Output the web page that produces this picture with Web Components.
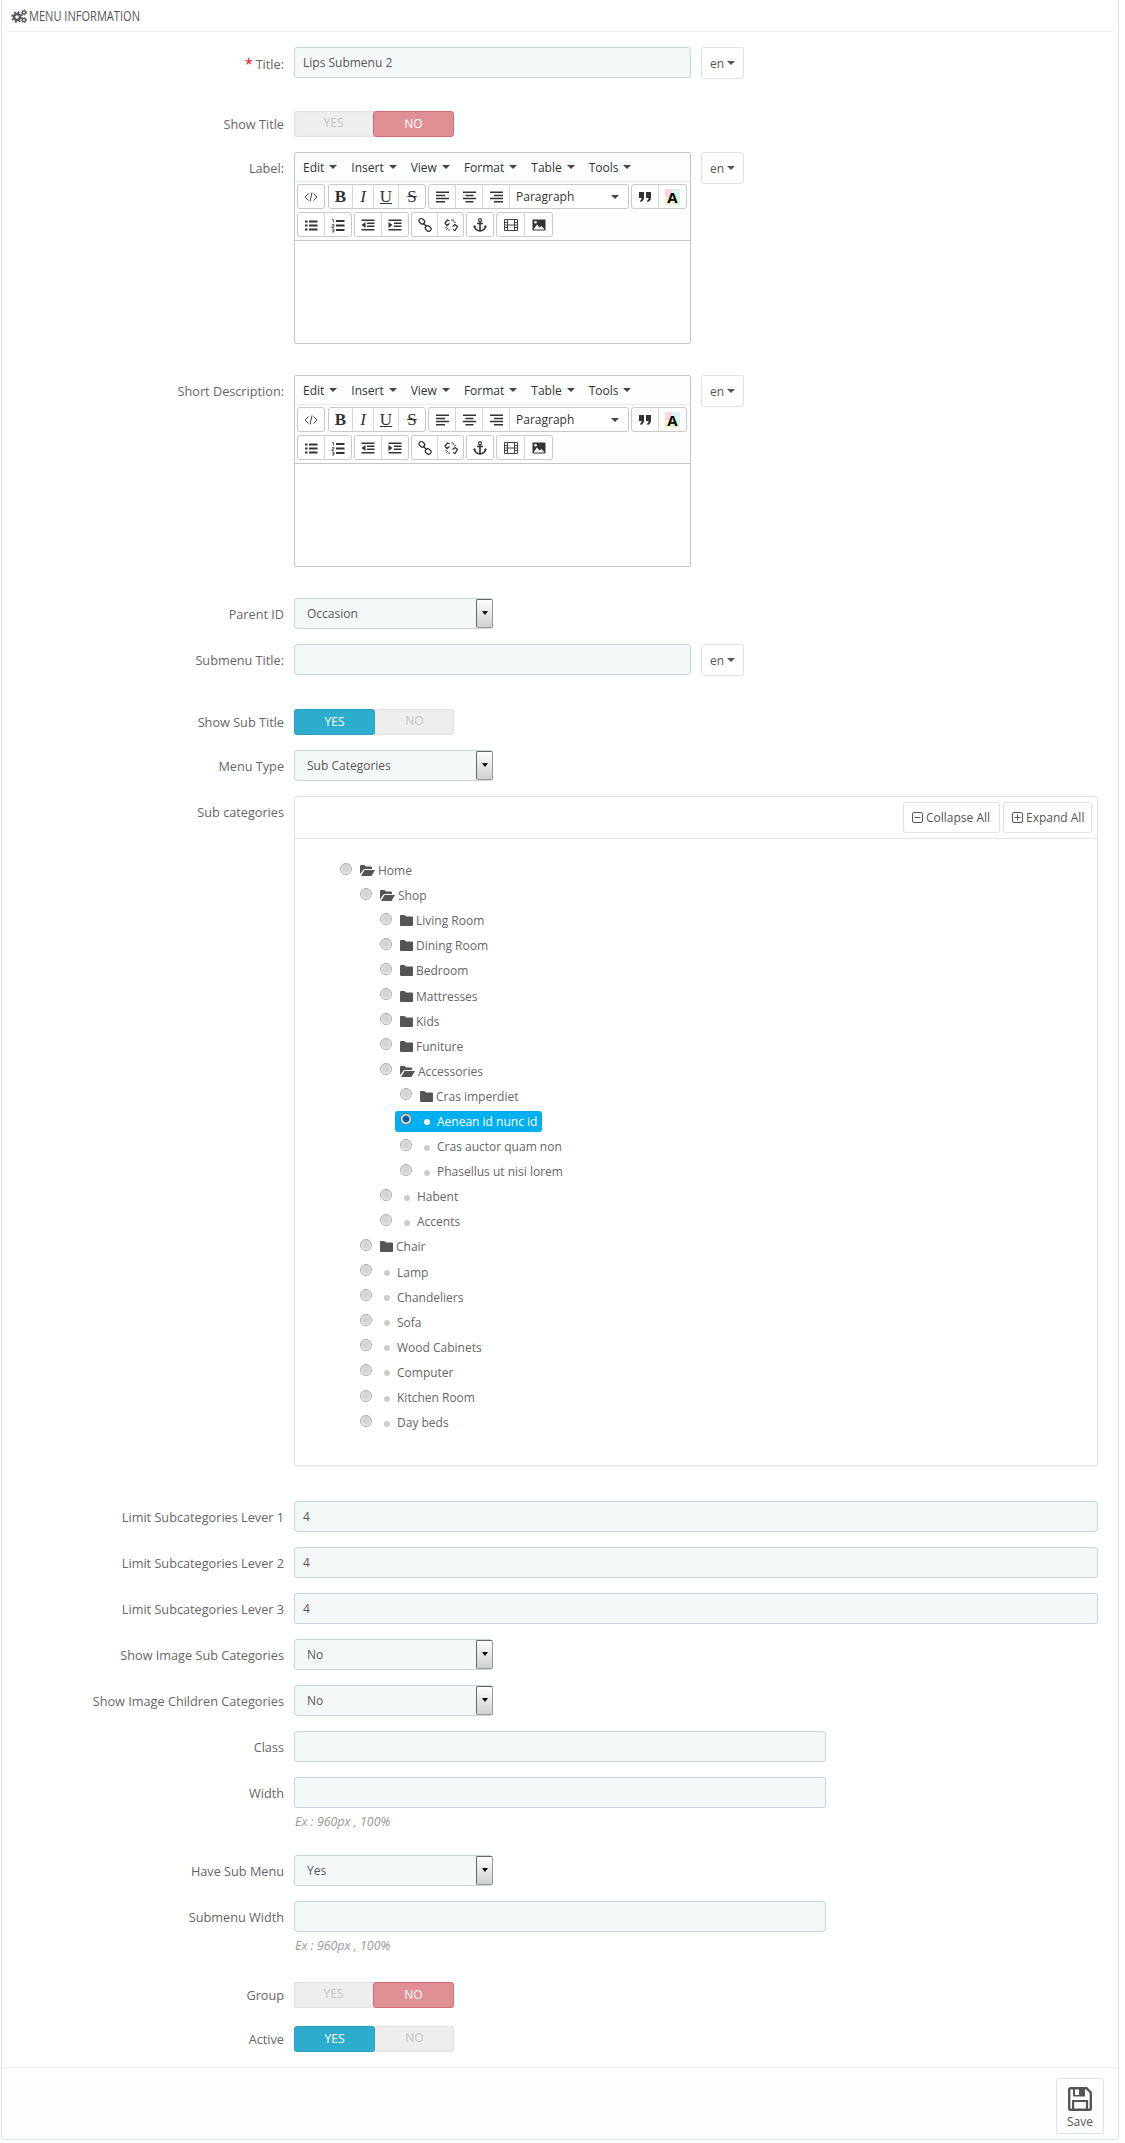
<!DOCTYPE html>
<html lang="en">
<head>
<meta charset="utf-8">
<title>Menu information</title>
<style>
    html, body { margin: 0; background: #fff; }
    body { font: 12px/17px "Open Sans", "Liberation Sans", sans-serif; color: #666; }
</style>
</head>
<body>

<menu-panel heading="Menu information">
    <form-row label="Title:" required style="margin-bottom:32px">
        <text-field value="Lips Submenu 2" style="width:397px"></text-field>
        <lang-button></lang-button>
    </form-row>
    <form-row label="Show Title" compact>
        <switch-toggle value="no"></switch-toggle>
    </form-row>
    <form-row label="Label:" style="margin-bottom:31px">
        <rich-editor></rich-editor>
        <lang-button></lang-button>
    </form-row>
    <form-row label="Short Description:" style="margin-bottom:31px">
        <rich-editor></rich-editor>
        <lang-button></lang-button>
    </form-row>
    <form-row label="Parent ID">
        <select-box value="Occasion"></select-box>
    </form-row>
    <form-row label="Submenu Title:" style="margin-bottom:33px">
        <text-field style="width:397px"></text-field>
        <lang-button></lang-button>
    </form-row>
    <form-row label="Show Sub Title" compact>
        <switch-toggle value="yes"></switch-toggle>
    </form-row>
    <form-row label="Menu Type">
        <select-box value="Sub Categories"></select-box>
    </form-row>
    <form-row label="Sub categories" style="margin-bottom:35px">
        <category-tree>
            <tree-node level="0" kind="open">Home</tree-node>
            <tree-node level="1" kind="open">Shop</tree-node>
            <tree-node level="2" kind="folder">Living Room</tree-node>
            <tree-node level="2" kind="folder">Dining Room</tree-node>
            <tree-node level="2" kind="folder">Bedroom</tree-node>
            <tree-node level="2" kind="folder">Mattresses</tree-node>
            <tree-node level="2" kind="folder">Kids</tree-node>
            <tree-node level="2" kind="folder">Funiture</tree-node>
            <tree-node level="2" kind="open">Accessories</tree-node>
            <tree-node level="3" kind="folder">Cras imperdiet</tree-node>
            <tree-node level="3" selected>Aenean id nunc id</tree-node>
            <tree-node level="3">Cras auctor quam non</tree-node>
            <tree-node level="3">Phasellus ut nisi lorem</tree-node>
            <tree-node level="2">Habent</tree-node>
            <tree-node level="2">Accents</tree-node>
            <tree-node level="1" kind="folder">Chair</tree-node>
            <tree-node level="1">Lamp</tree-node>
            <tree-node level="1">Chandeliers</tree-node>
            <tree-node level="1">Sofa</tree-node>
            <tree-node level="1">Wood Cabinets</tree-node>
            <tree-node level="1">Computer</tree-node>
            <tree-node level="1">Kitchen Room</tree-node>
            <tree-node level="1">Day beds</tree-node>
        </category-tree>
    </form-row>
    <form-row label="Limit Subcategories Lever 1"><text-field value="4" style="flex:1"></text-field></form-row>
    <form-row label="Limit Subcategories Lever 2"><text-field value="4" style="flex:1"></text-field></form-row>
    <form-row label="Limit Subcategories Lever 3"><text-field value="4" style="flex:1"></text-field></form-row>
    <form-row label="Show Image Sub Categories"><select-box value="No"></select-box></form-row>
    <form-row label="Show Image Children Categories"><select-box value="No"></select-box></form-row>
    <form-row label="Class"><text-field style="width:532px"></text-field></form-row>
    <form-row label="Width" style="margin-bottom:25px">
        <text-field style="width:532px"></text-field>
        <help-text>Ex : 960px , 100%</help-text>
    </form-row>
    <form-row label="Have Sub Menu"><select-box value="Yes"></select-box></form-row>
    <form-row label="Submenu Width" style="margin-bottom:28px">
        <text-field style="width:532px"></text-field>
        <help-text>Ex : 960px , 100%</help-text>
    </form-row>
    <form-row label="Group" compact style="margin-bottom:18px">
        <switch-toggle value="no"></switch-toggle>
    </form-row>
    <form-row label="Active" compact>
        <switch-toggle value="yes"></switch-toggle>
    </form-row>
    <save-button slot="footer"></save-button>
</menu-panel>

<script>
class MenuPanel extends HTMLElement {
    connectedCallback() {
        this.attachShadow({ mode: 'open' });
        this.shadowRoot.innerHTML = `
            <style>
                :host {
                    display: block;
                    box-sizing: border-box;
                    width: 1118px;
                    margin-left: 1px;
                    background: #fff;
                    border: 1px solid #dde2e5;
                    border-top: 0;
                    border-radius: 0 0 3px 3px;
                }
                header {
                    display: flex;
                    align-items: center;
                    gap: 2px;
                    height: 32px;
                    margin: 0 5px;
                    padding-left: 4px;
                    box-sizing: border-box;
                    border-bottom: 1px solid #eee;
                    color: #555;
                    font-size: 14px;
                    text-transform: uppercase;
                }
                header span { transform: scaleX(0.79); transform-origin: 0 50%; white-space: nowrap; }
                header svg { display: block; }
                .body { padding-top: 15px; }
                footer {
                    display: flex;
                    justify-content: flex-end;
                    padding: 10px 14px 5px;
                    background: #fcfdfe;
                    border-top: 1px solid #eee;
                    border-radius: 0 0 3px 3px;
                }
            </style>
            <header>
                <svg width="16" height="14" viewBox="0 0 16 14">
                    <circle cx="6" cy="8" r="3" fill="none" stroke="#555" stroke-width="2.4"/>
                    <circle cx="6" cy="8" r="5" fill="none" stroke="#555" stroke-width="1.6" stroke-dasharray="2 1.93"/>
                    <circle cx="13" cy="3.4" r="1.6" fill="none" stroke="#555" stroke-width="1.3"/>
                    <circle cx="13" cy="3.4" r="2.6" fill="none" stroke="#555" stroke-width="1" stroke-dasharray="1.2 1.2"/>
                    <circle cx="13" cy="11" r="1.6" fill="none" stroke="#555" stroke-width="1.3"/>
                    <circle cx="13" cy="11" r="2.6" fill="none" stroke="#555" stroke-width="1" stroke-dasharray="1.2 1.2"/>
                </svg>
                <span>${this.getAttribute('heading')}</span>
            </header>
            <div class="body"><slot></slot></div>
            <footer><slot name="footer"></slot></footer>
        `;
    }
}

class FormRow extends HTMLElement {
    connectedCallback() {
        this.attachShadow({ mode: 'open' });
        const star = this.hasAttribute('required') ? '<b>*</b>' : '';
        this.shadowRoot.innerHTML = `
            <style>
                :host {
                    display: grid;
                    grid-template-columns: 282px 804px;
                    column-gap: 10px;
                    margin-bottom: 15px;
                }
                .label {
                    padding-top: 8px;
                    text-align: right;
                    white-space: nowrap;
                    font-size: 12.7px;
                }
                :host([compact]) .label { padding-top: 5px; }
                b {
                    margin-right: 3px;
                    color: #e00;
                    font-size: 14px;
                    font-weight: 400;
                }
                .control {
                    display: flex;
                    flex-wrap: wrap;
                    align-items: flex-start;
                    column-gap: 10px;
                }
            </style>
            <div class="label">${star}${this.getAttribute('label')}</div>
            <div class="control"><slot></slot></div>
        `;
    }
}

class TextField extends HTMLElement {
    connectedCallback() {
        this.attachShadow({ mode: 'open' });
        this.shadowRoot.innerHTML = `
            <style>
                :host {
                    display: block;
                    box-sizing: border-box;
                    height: 31px;
                    padding: 6px 8px;
                    background: #f5f8f9;
                    border: 1px solid #c7d6db;
                    border-radius: 3px;
                    color: #555;
                }
            </style>
            <span>${this.getAttribute('value') || ''}</span>
        `;
    }
}

class LangButton extends HTMLElement {
    connectedCallback() {
        this.attachShadow({ mode: 'open' });
        this.shadowRoot.innerHTML = `
            <style>
                :host {
                    display: flex;
                    align-items: center;
                    box-sizing: border-box;
                    width: 43px;
                    height: 32px;
                    padding-left: 8px;
                    background: #fff;
                    border: 1px solid #dfe3e6;
                    border-radius: 3px;
                    color: #555;
                }
                i {
                    margin-left: 3px;
                    border: 4px solid transparent;
                    border-top-color: #555;
                    border-bottom: 0;
                }
            </style>
            <span>en</span><i></i>
        `;
    }
}

class SwitchToggle extends HTMLElement {
    connectedCallback() {
        this.attachShadow({ mode: 'open' });
        const value = this.getAttribute('value');
        this.shadowRoot.innerHTML = `
            <style>
                :host {
                    display: flex;
                    box-sizing: border-box;
                    width: 160px;
                    height: 26px;
                    background: #eee;
                    border-radius: 3px;
                    box-shadow: inset 0 0 2px rgba(0, 0, 0, 0.2);
                    text-transform: uppercase;
                    color: #c4c4c4;
                    line-height: 24px;
                    text-align: center;
                }
                span { flex: 1; box-sizing: border-box; border-radius: 3px; }
                .yes { background: #2eacce; border: 1px solid #2a9fc0; color: #fff; }
                .no { background: #e08f95; border: 1px solid #cf6c74; color: #fff; }
            </style>
            <span class="${value === 'yes' ? 'yes' : ''}">Yes</span>
            <span class="${value === 'no' ? 'no' : ''}">No</span>
        `;
    }
}

class SelectBox extends HTMLElement {
    connectedCallback() {
        this.attachShadow({ mode: 'open' });
        this.shadowRoot.innerHTML = `
            <style>
                :host {
                    display: flex;
                    box-sizing: border-box;
                    width: 199px;
                    height: 31px;
                    background: #f5f8f9;
                    border: 1px solid #c7d6db;
                    border-radius: 3px;
                    color: #555;
                }
                span { flex: 1; padding: 6px 12px; }
                .arrow {
                    display: flex;
                    justify-content: center;
                    padding-top: 11px;
                    box-sizing: border-box;
                    width: 17px;
                    margin-right: -1px;
                    background: linear-gradient(#fdfdfd, #cfcfcf);
                    border: 1px solid #666;
                    border-right-color: #999;
                    border-bottom-color: #999;
                    border-radius: 2px;
                }
                i {
                    height: 0;
                    border: 3.5px solid transparent;
                    border-top: 4px solid #000;
                    border-bottom: 0;
                }
            </style>
            <span>${this.getAttribute('value')}</span>
            <div class="arrow"><i></i></div>
        `;
    }
}

class HelpText extends HTMLElement {
    connectedCallback() {
        this.attachShadow({ mode: 'open' });
        this.shadowRoot.innerHTML = `
            <style>
                :host {
                    display: block;
                    flex-basis: 100%;
                    margin-top: 5px;
                    padding-left: 1px;
                    color: #999;
                    font-size: 12.4px;
                    font-style: italic;
                }
            </style>
            <slot></slot>
        `;
    }
}

// toolbar icons for the editor, drawn on a 16px box
const editorIcons = {
    code: '<path d="M5.5 4.5 2 8l3.5 3.5M10.5 4.5 14 8l-3.500 3.500M9 3.500 7 12.500" fill="none" stroke="#444" stroke-width="1"/>',
    left: '<path d="M2 2.500h13v1.600H2zM2 5.800h9v1.400H2zM2 8.800h13v1.400H2zM2 11.900h9v1.600H2z" fill="#333"/>',
    center: '<path d="M2 2.500h13v1.600H2zM4.500 5.800h8v1.400h-8zM2 8.800h13v1.400H2zM4.500 11.900h8v1.600h-8z" fill="#333"/>',
    right: '<path d="M2 2.500h13v1.600H2zM6 5.800h9v1.400H6zM2 8.800h13v1.400H2zM6 11.900h9v1.600H6z" fill="#333"/>',
    quote: '<path d="M2 3h5v5.500C7 11 5.500 12.500 3.500 13l-.5-1.500c1-.3 1.500-1 1.500-2.500H2zM9 3h5v5.500c0 2.500-1.500 4-3.500 4.500l-.5-1.500c1-.3 1.500-1 1.500-2.500H9z" fill="#333"/>',
    bullets: '<path d="M2 3.500h2.500v2H2zM6 3.500h8.500v2H6zM2 7.500h2.500v2H2zM6 7.500h8.500v2H6zM2 11.500h2.500v2H2zM6 11.500h8.500v2H6z" fill="#333"/>',
    numbers: '<path d="M6 3h8.500v2H6zM6 7.500h8.500v2H6zM6 12h8.500v2H6z" fill="#333"/><path d="M2 2.500h1.500v3M2 7.500h2v1.500H2v1.500h2M2 12h2v3H2M2.500 13.500H4" fill="none" stroke="#444" stroke-width=".8"/>',
    outdent: '<path d="M1.500 2.500h13V4h-13zM7 5.500h7.500V7H7zM7 8.500h7.500V10H7zM1.500 12h13v1.500h-13zM5.500 5v6l-4-3z" fill="#333"/>',
    indent: '<path d="M1.500 2.500h13V4h-13zM7 5.500h7.500V7H7zM7 8.500h7.500V10H7zM1.500 12h13v1.500h-13zM1.500 5v6l4-3z" fill="#333"/>',
    link: '<g fill="none" stroke="#333" stroke-width="1.300"><rect x="1.800" y="2" width="6" height="4.600" rx="2.300" transform="rotate(40 4.800 4.300)"/><rect x="8.200" y="9.200" width="6" height="4.600" rx="2.300" transform="rotate(40 11.200 11.500)"/><path d="m6.200 6.200 3.600 3.600"/></g>',
    unlink: '<g fill="none" stroke="#333" stroke-width="1.300"><path d="M6.500 6.500 4 8.500 2 6l2.500-3 2 1M9.500 9.500l2.500-2 2.500 2-2.500 4-2-1"/><path d="M9 2v2M11 3 10 5M13 5l-2 1M2 11l2-1M3 13l2-2M6 12v2" stroke-width=".8"/></g>',
    anchor: '<path d="M8 5v9M5 6.500h6M2.500 9c0 3 2.500 4.500 5.500 5 3-.5 5.500-2 5.500-5" fill="none" stroke="#333" stroke-width="1.600"/><circle cx="8" cy="3.200" r="1.500" fill="none" stroke="#333" stroke-width="1.200"/><path d="m1 10 1.500-2 1.500 2zM12 10l1.500-2 1.500 2z" fill="#333"/>',
    media: '<path d="M1.500 2.500h13v11h-13zM4.500 2.500v11M11.500 2.500v11M1.500 5.500h3M1.500 8h3M1.500 10.500h3M11.500 5.500h3M11.500 8h3M11.500 10.500h3M4.500 8h7" fill="none" stroke="#444" stroke-width="1"/>',
    image: '<path d="M1.500 2.500h13v11h-13z" fill="#333"/><path d="M2.500 12.500 6 7.500l2.500 3 2-1.500 3 3.500z" fill="#fff"/><circle cx="4.500" cy="5.300" r="1.300" fill="#fff"/>'
};

class RichEditor extends HTMLElement {
    button(width, inner) {
        return `<span class="btn" style="width:${width}px">${inner}</span>`;
    }

    icon(name) {
        return `<svg width="16" height="16" viewBox="0 0 16 16">${editorIcons[name]}</svg>`;
    }

    connectedCallback() {
        this.attachShadow({ mode: 'open' });
        const menus = ['Edit', 'Insert', 'View', 'Format', 'Table', 'Tools']
            .map(m => `<span class="menu">${m}<i></i></span>`).join('');
        this.shadowRoot.innerHTML = `
            <style>
                :host {
                    display: block;
                    box-sizing: border-box;
                    width: 397px;
                    height: 192px;
                    background: #fff;
                    border: 1px solid #c5c5c5;
                    border-radius: 2px;
                    color: #333;
                }
                .menubar {
                    display: flex;
                    align-items: center;
                    height: 28px;
                    padding-left: 8px;
                    background: #fcfdfe;
                    border-bottom: 1px solid #e9ecee;
                }
                .menu { display: flex; align-items: center; margin-right: 14px; }
                .menu i, .list i {
                    margin-left: 5px;
                    border: 4px solid transparent;
                    border-top-color: #444;
                    border-bottom: 0;
                }
                .tools {
                    display: flex;
                    flex-direction: column;
                    gap: 3px;
                    height: 59px;
                    box-sizing: border-box;
                    padding: 2px 0 0 2px;
                    background: #fcfdfe;
                    border-bottom: 1px solid #c5c5c5;
                }
                .row { display: flex; gap: 2px; }
                .group {
                    display: flex;
                    height: 25px;
                    box-sizing: border-box;
                    background: #fff;
                    border: 1px solid #c9c9c9;
                    border-radius: 3px;
                }
                .btn {
                    display: flex;
                    align-items: center;
                    justify-content: center;
                    box-sizing: border-box;
                    border-left: 1px solid #d6d6d6;
                    font-family: "Liberation Serif", serif;
                    font-size: 17px;
                    color: #333;
                }
                .btn:first-child { border-left: 0; }
                .list {
                    justify-content: space-between;
                    padding: 0 9px 0 6px;
                    font: 12px "Open Sans", "Liberation Sans", sans-serif;
                }
                .fore {
                    display: block;
                    width: 15px;
                    height: 16px;
                    line-height: 16px;
                    text-align: center;
                    font: 700 15px/16px "Open Sans", "Liberation Sans", sans-serif;
                    color: #000;
                    background:
                        linear-gradient(90deg, #fbd5e0 0 50%, #d8f2f8 50%) top / 100% 50% no-repeat,
                        linear-gradient(90deg, #fdf3c4 0 50%, #dff3d8 50%) bottom / 100% 50% no-repeat;
                }
            </style>
            <div class="menubar">${menus}</div>
            <div class="tools">
                <div class="row" style="gap:0">
                    <div class="group" style="margin-right:3px">${this.button(26, this.icon('code'))}</div>
                    <div class="group" style="margin-right:2px">
                        ${this.button(23, '<b>B</b>')}${this.button(21, '<i>I</i>')}${this.button(25, '<u>U</u>')}${this.button(27, '<s>S</s>')}
                    </div>
                    <div class="group" style="margin-right:2px">
                        ${this.button(26, this.icon('left'))}${this.button(27, this.icon('center'))}${this.button(27, this.icon('right'))}
                        <span class="btn list" style="width:119px">Paragraph<i></i></span>
                    </div>
                    <div class="group">${this.button(26, this.icon('quote'))}${this.button(28, '<span class="fore">A</span>')}</div>
                </div>
                <div class="row">
                    <div class="group">${this.button(26, this.icon('bullets'))}${this.button(27, this.icon('numbers'))}</div>
                    <div class="group">${this.button(26, this.icon('outdent'))}${this.button(27, this.icon('indent'))}</div>
                    <div class="group">${this.button(25, this.icon('link'))}${this.button(26, this.icon('unlink'))}</div>
                    <div class="group">${this.button(26, this.icon('anchor'))}</div>
                    <div class="group">${this.button(27, this.icon('media'))}${this.button(28, this.icon('image'))}</div>
                </div>
            </div>
        `;
    }
}

class CategoryTree extends HTMLElement {
    connectedCallback() {
        this.attachShadow({ mode: 'open' });
        this.shadowRoot.innerHTML = `
            <style>
                :host {
                    display: block;
                    flex: 1;
                    box-sizing: border-box;
                    background: #fff;
                    border: 1px solid #dde2e5;
                    border-radius: 3px;
                    box-shadow: 0 1px 1px rgba(0, 0, 0, 0.05);
                }
                .bar {
                    display: flex;
                    justify-content: flex-end;
                    gap: 3px;
                    height: 42px;
                    box-sizing: border-box;
                    padding: 5px 5px 0 0;
                    border-bottom: 1px solid #e3e6e8;
                }
                .btn {
                    display: flex;
                    align-items: center;
                    gap: 3px;
                    height: 31px;
                    box-sizing: border-box;
                    padding-left: 8px;
                    border: 1px solid #dfe3e6;
                    border-radius: 3px;
                    color: #555;
                }
                .list { padding: 19px 0 30px 45px; }
            </style>
            <div class="bar">
                <span class="btn" style="width:97px">
                    <svg width="11" height="11" viewBox="0 0 11 11"><rect x=".5" y=".5" width="10" height="10" rx="1.500" fill="none" stroke="#555"/><path d="M2.500 5.500h6" stroke="#555"/></svg>Collapse All
                </span>
                <span class="btn" style="width:89px">
                    <svg width="11" height="11" viewBox="0 0 11 11"><rect x=".5" y=".5" width="10" height="10" rx="1.500" fill="none" stroke="#555"/><path d="M2.500 5.500h6M5.500 2.500v6" stroke="#555"/></svg>Expand All
                </span>
            </div>
            <div class="list"><slot></slot></div>
        `;
    }
}

class TreeNode extends HTMLElement {
    connectedCallback() {
        this.attachShadow({ mode: 'open' });
        const kind = this.getAttribute('kind');
        let icon = '<span class="dot"></span>';
        if (kind === 'folder') {
            icon = `<svg class="fold" width="13" height="11" viewBox="0 0 13 11"><path d="M1 0h3.500l1.500 1.500h6a1 1 0 0 1 1 1V10a1 1 0 0 1-1 1H1a1 1 0 0 1-1-1V1a1 1 0 0 1 1-1z" fill="#555"/></svg>`;
        } else if (kind === 'open') {
            icon = `<svg class="open" width="15" height="11" viewBox="0 0 15 11"><path d="M0 1a1 1 0 0 1 1-1h3.500L6 1.500h5a1 1 0 0 1 1 1V4H4L0 9z" fill="#555"/><path d="M4.500 5H15l-3.500 6H1z" fill="#555"/></svg>`;
        }
        this.shadowRoot.innerHTML = `
            <style>
                :host {
                    display: flex;
                    align-items: center;
                    height: 25.1px;
                    padding-left: calc(var(--level) * 20px);
                }
                .item {
                    display: flex;
                    align-items: center;
                    height: 21px;
                    margin-left: -5px;
                    padding: 0 5px;
                    border-radius: 3px;
                    color: #666;
                    white-space: nowrap;
                }
                :host([selected]) .item { background: #00aff0; color: #fff; }
                .radio {
                    box-sizing: border-box;
                    width: 12px;
                    height: 12px;
                    margin-right: 8px;
                    transform: translateY(-2px);
                    border: 1px solid #adadad;
                    border-radius: 50%;
                    background: radial-gradient(circle, #d2d2d2 0, #d6d6d6 3.200px, #f1f1f1 4.800px);
                    box-shadow: inset 0 1px 1px rgba(0, 0, 0, 0.12);
                }
                :host([selected]) .radio {
                    background: radial-gradient(circle, #0b5e96 0 2.500px, #3f86b5 3.200px, #f2f6f8 4.200px);
                    border-color: #777;
                }
                .fold { margin-right: 3px; }
                .open { margin-right: 3px; }
                .dot {
                    width: 6px;
                    height: 6px;
                    margin: 2px 7px 0 4px;
                    border-radius: 50%;
                    background: #ccc;
                }
                :host([selected]) .dot { background: #fff; }
            </style>
            <span class="item"><span class="radio"></span>${icon}<slot></slot></span>
        `;
        this.style.setProperty('--level', this.getAttribute('level'));
    }
}

class SaveButton extends HTMLElement {
    connectedCallback() {
        this.attachShadow({ mode: 'open' });
        this.shadowRoot.innerHTML = `
            <style>
                :host {
                    display: flex;
                    flex-direction: column;
                    align-items: center;
                    box-sizing: border-box;
                    width: 48px;
                    height: 56px;
                    padding-top: 8px;
                    background: #fff;
                    border: 1px solid #dfe3e6;
                    border-radius: 3px;
                    color: #555;
                }
                svg { display: block; margin-bottom: 2px; }
            </style>
            <svg width="24" height="24" viewBox="0 0 24 24">
                <path d="M2.500 1.200h16l4.300 4.300v16a1.300 1.300 0 0 1-1.300 1.300h-19a1.300 1.300 0 0 1-1.300-1.300v-19a1.300 1.300 0 0 1 1.300-1.300z" fill="none" stroke="#555" stroke-width="2.400"/>
                <path d="M5 1h12v8.500H5z" fill="#555"/>
                <path d="M7 2.500h4v5.500H7z" fill="#fff"/>
                <path d="M5 14h14v9" fill="none" stroke="#555" stroke-width="2.200"/>
                <path d="M5.100 13v10" stroke="#555" stroke-width="2.200"/>
            </svg>
            <span>Save</span>
        `;
    }
}

customElements.define('menu-panel', MenuPanel);
customElements.define('form-row', FormRow);
customElements.define('text-field', TextField);
customElements.define('lang-button', LangButton);
customElements.define('switch-toggle', SwitchToggle);
customElements.define('select-box', SelectBox);
customElements.define('help-text', HelpText);
customElements.define('rich-editor', RichEditor);
customElements.define('category-tree', CategoryTree);
customElements.define('tree-node', TreeNode);
customElements.define('save-button', SaveButton);
</script>
</body>
</html>
